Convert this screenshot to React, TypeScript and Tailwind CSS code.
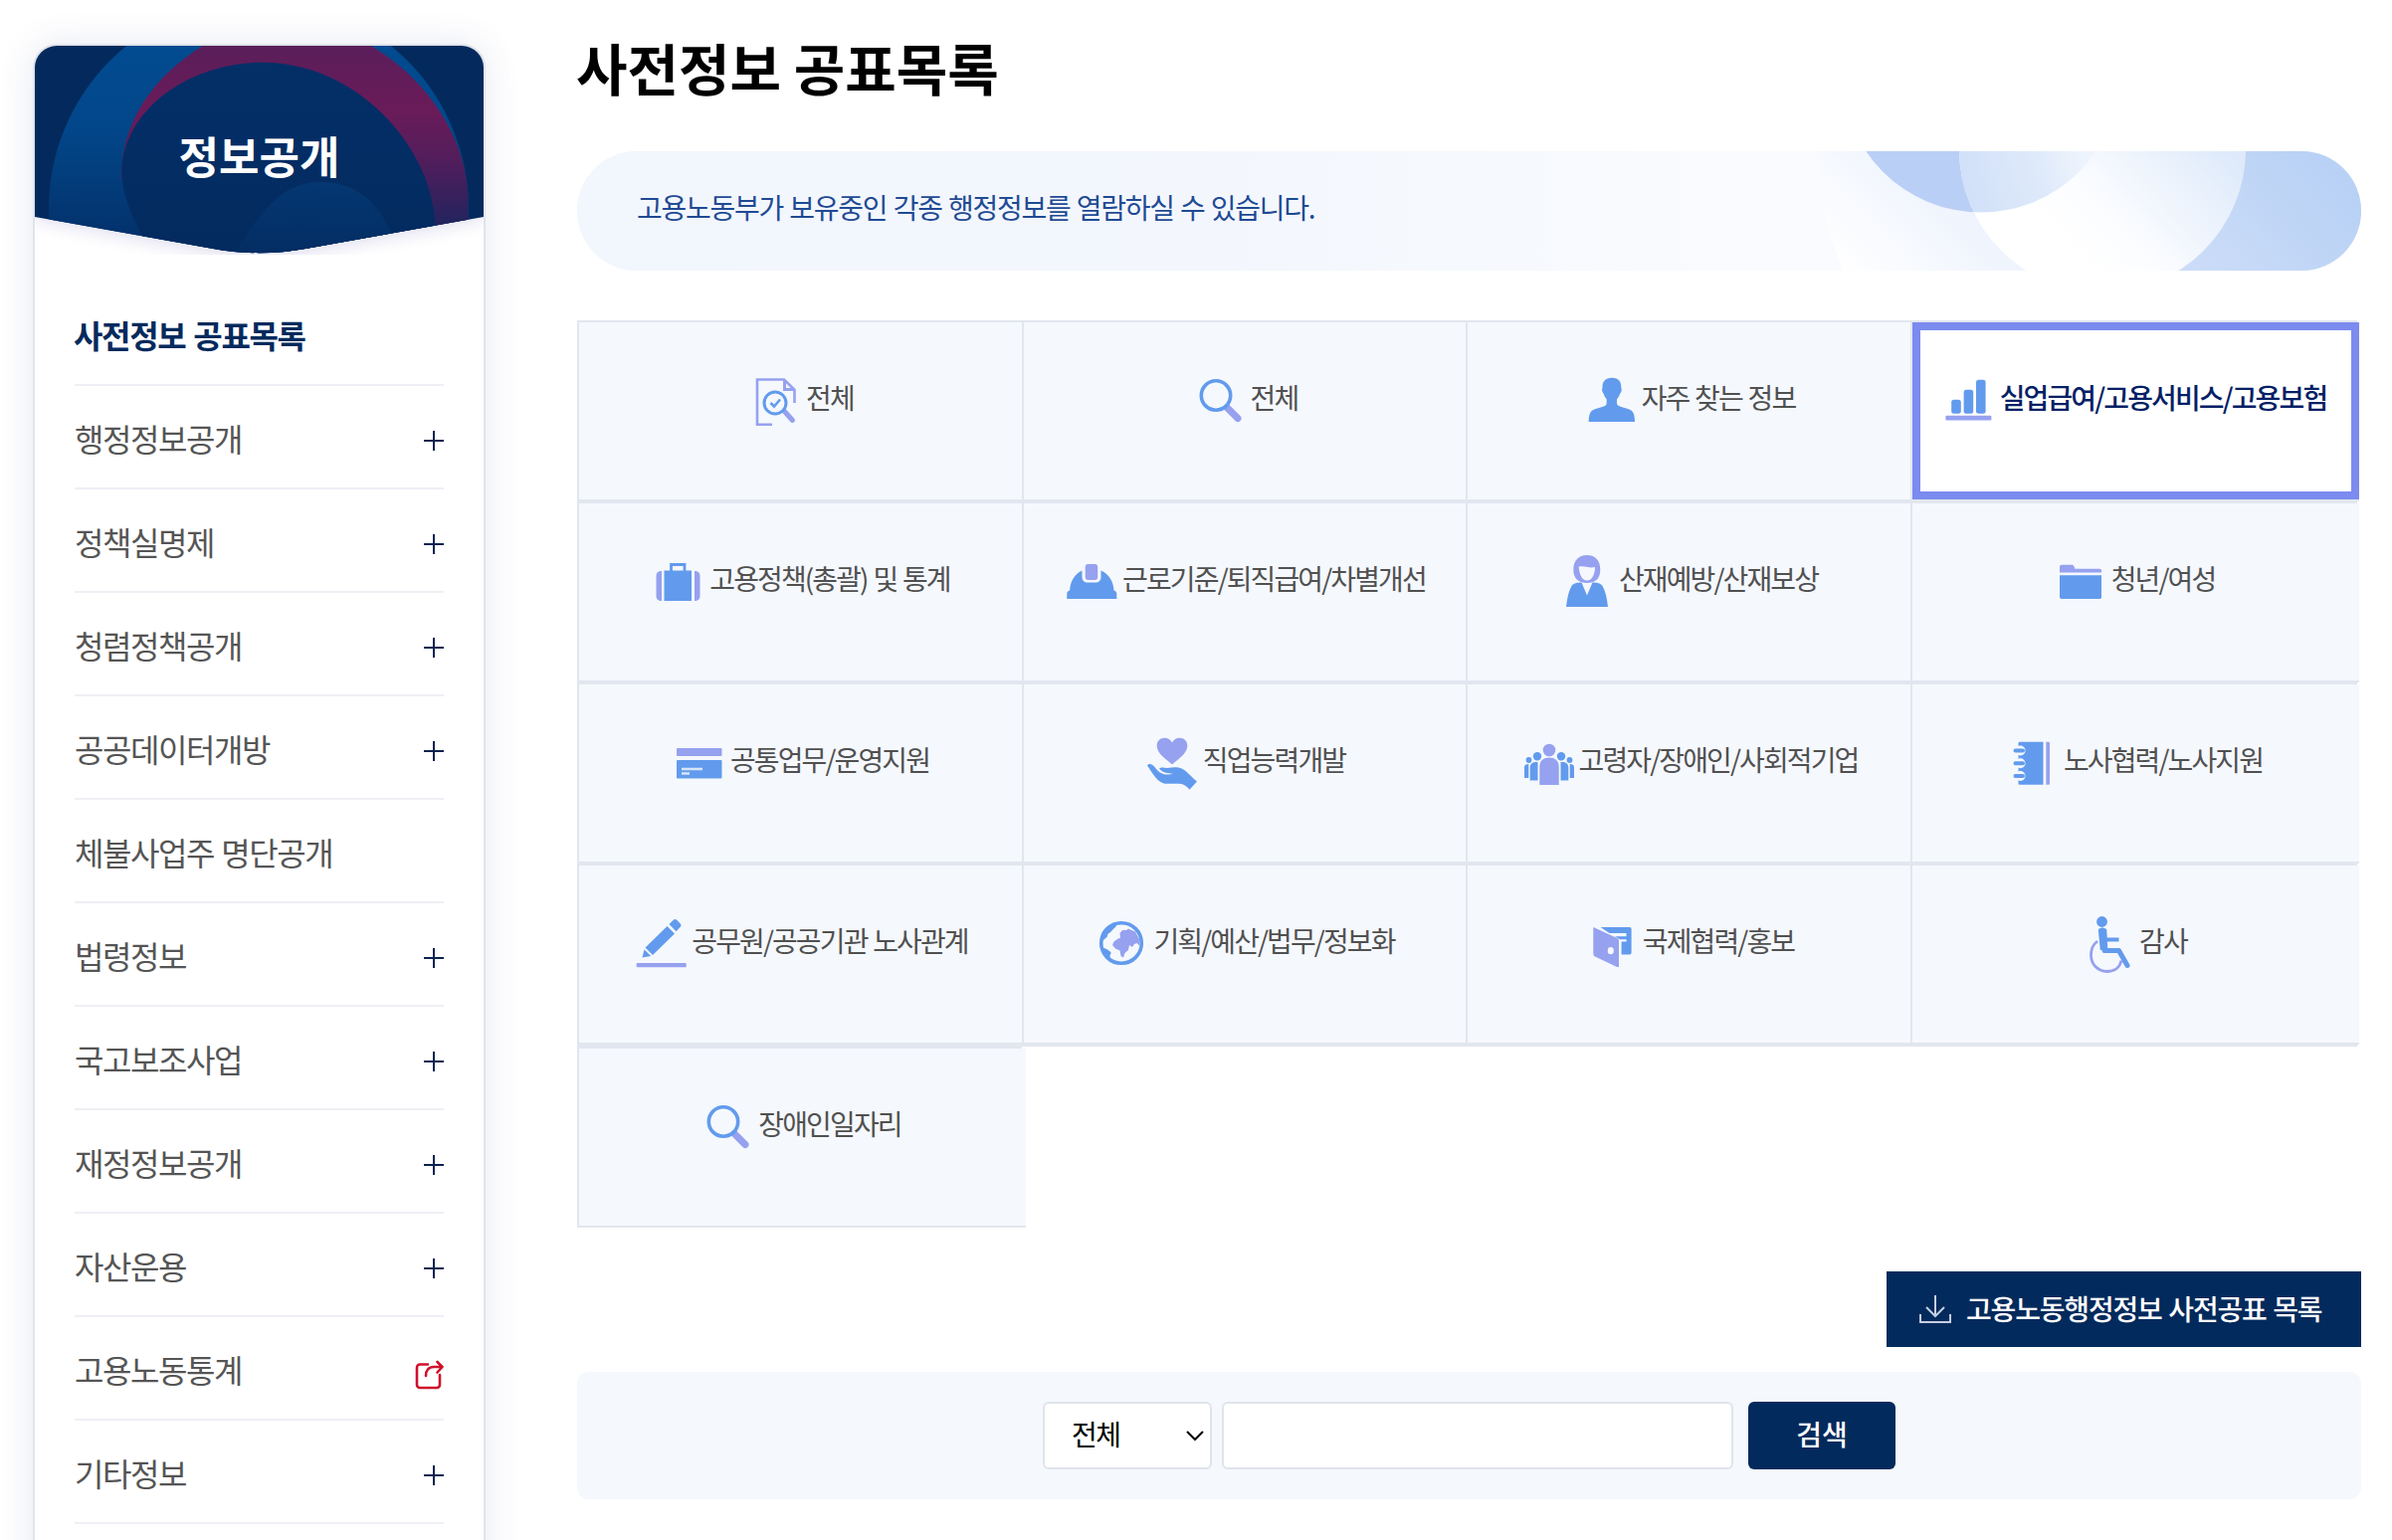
import React from 'react';

const BLUE = '#629bed';
const PURPLE = '#96a1ef';

const menus = [
  { label: '사전정보 공표목록', type: 'active' },
  { label: '행정정보공개', type: 'plus' },
  { label: '정책실명제', type: 'plus' },
  { label: '청렴정책공개', type: 'plus' },
  { label: '공공데이터개방', type: 'plus' },
  { label: '체불사업주 명단공개', type: 'none' },
  { label: '법령정보', type: 'plus' },
  { label: '국고보조사업', type: 'plus' },
  { label: '재정정보공개', type: 'plus' },
  { label: '자산운용', type: 'plus' },
  { label: '고용노동통계', type: 'link' },
  { label: '기타정보', type: 'plus' },
];

const icons: Record<string, React.ReactNode> = {
  doc: (
    <>
      <path d="M25 52.7H10V7.5h27l10.5 10.3V31" stroke={PURPLE} strokeWidth="2.6" />
      <path d="M37.5 8v9.5H47" stroke={PURPLE} strokeWidth="3" />
      <path d="M37 39l8.5 9.5" stroke={PURPLE} strokeWidth="5" strokeLinecap="round" />
      <circle cx="28" cy="31" r="11" stroke={BLUE} strokeWidth="3" />
      <path d="M23.5 31l3.5 3.5 6-7" stroke={BLUE} strokeWidth="2.6" />
    </>
  ),
  search: (
    <>
      <path d="M35 35.5l11 11" stroke={PURPLE} strokeWidth="7" strokeLinecap="round" />
      <circle cx="24" cy="23.5" r="14.7" fill="#f5f8fd" stroke={BLUE} strokeWidth="3.6" />
    </>
  ),
  person: (
    <path
      d="M29 5.8c6.5 0 9.6 3.8 9.3 9.7 0 1.2.7 1 .3 3.4-.3 1.6-1.3 2-1.6 3.2-.6 2.4-2 4-3 5.3 0 3-.3 5 1 6 3 2.2 8.5 2.5 12.5 4.5 3.5 1.8 4.5 6 4.5 12.1H5.7c0-6.1 1-10.3 4.5-12.1 4-2 9.5-2.3 12.500-4.500 1.300-1 1-3 1-6-1-1.300-2.300-2.900-2.900-5.300-.3-1.200-1.300-1.600-1.600-3.200-.4-2.400.3-2.200.3-3.400-.3-5.900 3-9.700 9.500-9.700z"
      fill={BLUE}
    />
  ),
  chart: (
    <>
      <rect x="10.2" y="27.7" width="9.6" height="14" rx="2.5" fill={BLUE} />
      <rect x="22.6" y="17.7" width="9.6" height="24" rx="2.5" fill={BLUE} />
      <rect x="35" y="7.7" width="9.6" height="34" rx="2.5" fill={BLUE} />
      <rect x="4.4" y="43.7" width="46" height="4.7" rx="1" fill={PURPLE} />
    </>
  ),
  suitcase: (
    <>
      <path d="M20.5 18v-6.5h13.5V18" stroke={BLUE} strokeWidth="2.8" />
      <rect x="13.5" y="17.5" width="27.5" height="30.5" fill={BLUE} />
      <path d="M11 18v30c-3.500 0-5.500-1.500-5.500-5V23c0-3.500 2-5 5.500-5zM44 18v30c3.500 0 5.500-1.500 5.500-5V23c0-3.500-2-5-5.500-5z" fill={PURPLE} />
    </>
  ),
  helmet: (
    <>
      <path d="M18.5 17.5v6c0 4 2 6 6 6h7c4 0 6-2 6-6v-6C46 21 50 29 50.500 37.500c2 .5 2.800 1.500 2.800 3.500v5H3.300v-5c0-2 .8-3 2.800-3.500C6.600 29 10.500 21 18.500 17.500z" fill={BLUE} />
      <rect x="21.7" y="11" width="12.5" height="16" rx="3" fill={PURPLE} />
    </>
  ),
  woman: (
    <>
      <path
        d="M27 2c8.500 0 13.300 5.500 13.300 14.500S35.500 30 27 30 13.300 25.500 13.300 16.500 18.500 2 27 2zM18.700 13.500c.5 8 3.300 14 8.300 14s8-6 8-13.500c-6 1.500-10-1.500-16.300-.5z"
        fillRule="evenodd"
        fill={PURPLE}
      />
      <path d="M21.500 29.500L27 42.500l5.500-13c4 0 8 .5 10 3.500 3 5 4.500 12 5.500 21H6c1-9 2.500-16 5.500-21 2-3 6-3.500 10-3.500z" fill={BLUE} />
    </>
  ),
  folder: (
    <>
      <path d="M7 14c0-1.500.8-2.300 2.300-2.300h10c1.500 0 2.200 1 3 4H47c1.500 0 2 .8 2 2V19.500H7z" fill={PURPLE} />
      <path d="M7 22.300h42V44c0 1.500-.7 2-2 2H9c-1.500 0-2-.7-2-2z" fill={BLUE} />
    </>
  ),
  card: (
    <>
      <rect x="5" y="14" width="45.5" height="8" rx="1" fill={PURPLE} />
      <rect x="5" y="26" width="45.5" height="18.5" rx="1" fill={BLUE} />
      <path d="M10 35h21M10 39.500h8" stroke="#d6e5fb" strokeWidth="2.4" />
    </>
  ),
  heart: (
    <>
      <path d="M28 30.500C22 25 12.700 19.500 12.700 11.500c0-4.700 3.300-7.800 7.800-7.800 3.300 0 6 1.800 7.500 4.800 1.500-3 4.200-4.800 7.500-4.800 4.500 0 7.800 3.100 7.800 7.800 0 8-9.300 13.500-15.300 19z" fill={PURPLE} />
      <path
        d="M3 31.500c2-2.500 5-1.500 7 1 3 3.500 6 7.500 12 8 3 .3 5 0 6.500-1-5 0-10.500-1-13.500-4.800 1.500-2 5-1 8-.8 5.500 0 9-1.500 14 .3 5 2 9 7.500 16 13.300l-7.500 8.300c-3-3.500-6-6-10-6H20.500C13 48 8 39 3 31.500z"
        fill={BLUE}
      />
    </>
  ),
  people: (
    <>
      <circle cx="29" cy="16" r="6.3" fill={PURPLE} />
      <path d="M19.300 51V33c0-6.500 4-9.500 9.700-9.500s9.700 3 9.700 9.500v18z" fill={PURPLE} />
      <circle cx="17" cy="22.3" r="4.2" fill={BLUE} />
      <circle cx="41" cy="22.3" r="4.2" fill={BLUE} />
      <path d="M17.500 28v18.500H9.700V34c0-4.500 2.500-6.300 7.800-6zM40.500 28v18.500h7.800V34c0-4.500-2.500-6.300-7.800-6z" fill={BLUE} />
      <circle cx="8.5" cy="26" r="2.9" fill={BLUE} />
      <circle cx="49.5" cy="26" r="2.9" fill={BLUE} />
      <path d="M8.300 30v14H4V33c0-2 1.500-3 4.300-3zM49.700 30v14H54V33c0-2-1.500-3-4.300-3z" fill={BLUE} />
    </>
  ),
  notebook: (
    <>
      <path d="M13.500 9c0-1 .5-1.300 1.500-1.300h23.500v43H15c-1 0-1.500-.3-1.500-1.300z" fill={BLUE} />
      <circle cx="15.5" cy="16.5" r="5" fill="#f5f8fd" />
      <circle cx="15.5" cy="29.2" r="5" fill="#f5f8fd" />
      <circle cx="15.5" cy="42" r="5" fill="#f5f8fd" />
      <path d="M10.500 16.500h7.500M10.500 29.200h7.500M10.500 42h7.500" stroke={BLUE} strokeWidth="4" strokeLinecap="round" />
      <path d="M41.300 7.700h2.200c1 0 1.500.5 1.500 1.500v40c0 1-.5 1.500-1.500 1.500h-2.200z" fill={PURPLE} />
    </>
  ),
  pencil: (
    <>
      <path d="M12.500 32.500l7.500 7.500L42 18.500 34.500 11zM36.500 9l4-4c1.500-1.500 2.500-1.500 4 0l3 3.200c1.400 1.400 1.300 2.500 0 3.800l-4 4.200zM11.500 34.500l6.700 6.500-8.700 1.500z" fill={BLUE} />
      <rect x="3.7" y="48" width="50" height="4.3" rx=".8" fill={PURPLE} />
    </>
  ),
  globe: (
    <>
      <circle cx="27" cy="28" r="20.3" stroke={BLUE} strokeWidth="3.6" />
      <path d="M7 26c3-1 3.500-3 5.500-4 1-1.500 0-3.500 3-4.500 1.500-1 2-2.500 5.500-5.500l2-3L13.500 11.500 7.500 19zM6.500 32c3.500 1.500 4.500 1 6.500 2.500 1.500 1.500 4 2 3.500 4-1.500 1.500-1 3.500 0 7L10 41z" fill={BLUE} />
      <path d="M25.500 18l2.500-3h4l2-1.500 3 1.500 4 1.500 4 7.500.5 7-3-3-2.500 1-2 3-3-2-1 5-3.500 3-1.500 4.500-2.500-1.500-1-5.500-4.500-2-3-3.500 1.500-3.500 3.500-2.500 3-1.500z" fill={PURPLE} />
    </>
  ),
  door: (
    <>
      <path d="M16.600 12h29c1.500 0 2 .7 2 2v23.500c0 1.300-.7 2-2 2h-8V26.500h5v-2.300h-6.500L31 21.300h11.500V18H25.500z" fill={BLUE} />
      <path d="M9.300 12l24 11c1.200.6 1.700 1.300 1.700 2.500V52c-1 .3-2 0-3-.5L11 41.500c-1.200-.6-1.700-1.500-1.700-3zM26.800 32c-2.500 0-3 1.500-3 3.700s.5 3.500 3 3.500 3-1.300 3-3.500-.5-3.700-3-3.700z" fillRule="evenodd" fill={PURPLE} />
    </>
  ),
  wheelchair: (
    <>
      <path d="M17 26C12.500 29.500 10.500 34 10.500 40c0 9.500 7 16.500 16 16.500 7.500 0 13-4 14.500-11" stroke={PURPLE} strokeWidth="2.8" />
      <circle cx="21.5" cy="6.5" r="5.4" fill={BLUE} />
      <path d="M22 15l2 20.500h14.500L47 50.500" stroke={BLUE} strokeWidth="5" strokeLinecap="round" strokeLinejoin="round" />
      <path d="M24 24.500h14.500" stroke={BLUE} strokeWidth="4" />
      <path d="M17.800 15c0-3 8.200-3 8.500 0l1 20h-7.500z" fill={BLUE} />
    </>
  ),
};

const rows = [
  [
    { icon: 'doc', label: '전체' },
    { icon: 'search', label: '전체' },
    { icon: 'person', label: '자주 찾는 정보' },
    { icon: 'chart', label: '실업급여/고용서비스/고용보험', active: true },
  ],
  [
    { icon: 'suitcase', label: '고용정책(총괄) 및 통계' },
    { icon: 'helmet', label: '근로기준/퇴직급여/차별개선' },
    { icon: 'woman', label: '산재예방/산재보상' },
    { icon: 'folder', label: '청년/여성' },
  ],
  [
    { icon: 'card', label: '공통업무/운영지원' },
    { icon: 'heart', label: '직업능력개발' },
    { icon: 'people', label: '고령자/장애인/사회적기업' },
    { icon: 'notebook', label: '노사협력/노사지원' },
  ],
  [
    { icon: 'pencil', label: '공무원/공공기관 노사관계' },
    { icon: 'globe', label: '기획/예산/법무/정보화' },
    { icon: 'door', label: '국제협력/홍보' },
    { icon: 'wheelchair', label: '감사' },
  ],
];

function Cell({ icon, label, active, last }: { icon: string; label: string; active?: boolean; last?: boolean }) {
  return (
    <a
      className={
        active
          ? 'flex h-full justify-center border-8 border-[#7b8bef] bg-white pt-[42px] font-medium text-[#061f66]'
          : 'flex h-full justify-center bg-[#f5f8fd] pt-[50px] text-[#505050]'
      }
    >
      <svg width="60" height="60" viewBox="0 0 60 60" fill="none" className="shrink-0">
        {icons[icon]}
      </svg>
      <span
        className={`-ml-px whitespace-nowrap pt-[4px] text-[28px] leading-[42px] tracking-[-1.88px] [word-spacing:1.3px] ${last ? 'pr-[4px]' : ''}`}
      >
        {label}
      </span>
    </a>
  );
}

function Sidebar() {
  return (
    <aside className="mt-[44px] ml-[33px] h-[1600px] w-[455px] shrink-0 overflow-hidden rounded-t-[24px] border-2 border-[#e0e4eb] bg-white shadow-[0_0_36px_rgba(60,70,150,0.12)]">
      <div className="relative h-[210px]">
        <svg width="451" height="210" viewBox="35 46 451 210" fill="none" className="absolute inset-0">
          <defs>
            <clipPath id="head">
              <path d="M35 46H486V218L307 250C277 255.600 244 255.600 214 250L35 218z" />
            </clipPath>
            <linearGradient id="blue" x1="0" y1="46" x2="0" y2="250" gradientUnits="userSpaceOnUse">
              <stop offset="0" stopColor="#024b90" />
              <stop offset="0.4" stopColor="#02478a" />
              <stop offset="1" stopColor="#032f68" />
            </linearGradient>
            <linearGradient id="wine" x1="0" y1="46" x2="0" y2="232" gradientUnits="userSpaceOnUse">
              <stop offset="0" stopColor="#5a1e5a" />
              <stop offset="0.35" stopColor="#6a1b59" />
              <stop offset="0.6" stopColor="#541d5b" />
              <stop offset="1" stopColor="#1e245f" />
            </linearGradient>
            <linearGradient id="navy" x1="0" y1="60" x2="0" y2="250" gradientUnits="userSpaceOnUse">
              <stop offset="0" stopColor="#032f67" />
              <stop offset="1" stopColor="#032b60" />
            </linearGradient>
            <linearGradient id="dot" x1="0" y1="183" x2="0" y2="255" gradientUnits="userSpaceOnUse">
              <stop offset="0" stopColor="#053772" />
              <stop offset="1" stopColor="#032d63" />
            </linearGradient>
            <filter id="soft" x="-10%" y="-10%" width="120%" height="140%">
              <feGaussianBlur stdDeviation="8" />
            </filter>
          </defs>
          <path d="M35 100H486V222L307 256Q260 264 214 256L35 222z" fill="#e4e3f2" filter="url(#soft)" />
          <g clipPath="url(#head)">
            <rect x="35" y="46" width="451" height="210" fill="#042a5d" />
            <circle cx="260" cy="210" r="211" fill="url(#blue)" />
            <path d="M122 180C121 125 152 78 204 46H373C430 80 470.600 140 470.600 205V260H300z" fill="url(#wine)" />
            <path d="M155 260C135 222 122.500 200 122.500 172C124 110 190 62.700 264 62.700C360 62.700 437 150 437.500 230V260z" fill="url(#navy)" />
            <path d="M230 262C262 215 280 183 323 183C358 183 385 205 397 245V262z" fill="url(#dot)" />
          </g>
        </svg>
        <h2 className="relative pt-[77px] text-center text-[44px] leading-[66px] font-bold text-white">정보공개</h2>
      </div>
      <ul className="mt-[28px] px-[40px]">
        {menus.map((menu) => (
          <li key={menu.label} className="flex h-[104px] justify-between border-b-2 border-[#efeff5] pt-[28px]">
            <span
              className={
                menu.type === 'active'
                  ? '-ml-px text-[32px] leading-[48px] font-bold tracking-[-0.042em] text-[#042a5d] [word-spacing:2px]'
                  : 'text-[32px] leading-[48px] tracking-[-0.045em] text-[#555] [word-spacing:1.5px]'
              }
            >
              {menu.label}
            </span>
            {menu.type === 'plus' && (
              <svg width="20" height="20" viewBox="0 0 20 20" className="mt-[17px]">
                <path d="M0 10h20M10 0v20" stroke="#0a2350" strokeWidth="2" />
              </svg>
            )}
            {menu.type === 'link' && (
              <svg width="30" height="30" viewBox="0 0 30 30" fill="none" stroke="#d0112b" strokeWidth="2.6" strokeLinecap="round" strokeLinejoin="round" className="mt-[15px]">
                <path d="M14 4.500H6a3 3 0 0 0-3 3V25a3 3 0 0 0 3 3h17a3 3 0 0 0 3-3V15" />
                <path d="M12 16c0-5.500 3-9 8-9h8M23.500 2l5 5-5 5.500" />
              </svg>
            )}
          </li>
        ))}
      </ul>
    </aside>
  );
}

function Banner() {
  return (
    <div className="relative mt-[50px] h-[120px] w-[1793px] overflow-hidden rounded-full bg-[#f3f7fd]">
      <svg width="1793" height="120" viewBox="580 152 1793 120" className="absolute inset-0">
        <defs>
          <linearGradient id="base" x1="580" y1="0" x2="2373" y2="0" gradientUnits="userSpaceOnUse">
            <stop offset="0" stopColor="#f2f6fd" />
            <stop offset="0.35" stopColor="#f3f7fd" />
            <stop offset="0.7" stopColor="#fafbfe" />
          </linearGradient>
          <linearGradient id="big" x1="1850" y1="272" x2="2060" y2="60" gradientUnits="userSpaceOnUse">
            <stop offset="0" stopColor="#ffffff" />
            <stop offset="0.5" stopColor="#ecf2fd" />
            <stop offset="1" stopColor="#e6eefc" />
          </linearGradient>
          <linearGradient id="edge" x1="2190" y1="272" x2="2330" y2="152" gradientUnits="userSpaceOnUse">
            <stop offset="0" stopColor="#cdddf8" />
            <stop offset="1" stopColor="#b8d1f5" />
          </linearGradient>
          <linearGradient id="ring" x1="2060" y1="240" x2="2200" y2="110" gradientUnits="userSpaceOnUse">
            <stop offset="0" stopColor="#ffffff" />
            <stop offset="0.3" stopColor="#fcfdff" />
            <stop offset="1" stopColor="#deeafa" />
          </linearGradient>
          <linearGradient id="mix" x1="1975" y1="200" x2="2108" y2="160" gradientUnits="userSpaceOnUse">
            <stop offset="0" stopColor="#d1e0f9" />
            <stop offset="0.6" stopColor="#dfeafa" />
            <stop offset="1" stopColor="#eaf1fc" stopOpacity="0.5" />
          </linearGradient>
          <clipPath id="ringClip">
            <circle cx="2113" cy="150" r="144" />
          </clipPath>
        </defs>
        <rect x="580" y="152" width="1793" height="120" fill="url(#base)" />
        <circle cx="2140" cy="152" r="312" fill="url(#big)" />
        <rect x="2113" y="152" width="260" height="120" fill="url(#edge)" />
        <circle cx="1991" cy="74" r="139.5" fill="#bacff5" />
        <circle cx="2113" cy="150" r="144" fill="url(#ring)" />
        <circle cx="1991" cy="74" r="139.5" fill="url(#mix)" clipPath="url(#ringClip)" />
      </svg>
      <p className="relative pt-[35px] pl-[60px] text-[28px] leading-[42px] tracking-[-0.045em] text-[#1f4a94] [word-spacing:1.3px]">
        고용노동부가 보유중인 각종 행정정보를 열람하실 수 있습니다.
      </p>
    </div>
  );
}

export default function App() {
  return (
    <div className="flex h-[1548px] w-[2404px] overflow-hidden bg-white font-['Noto_Sans_CJK_KR','Noto_Sans',sans-serif]">
      <Sidebar />
      <main className="ml-[92px] w-[1793px] pt-[31px]">
        <h1 className="-ml-px text-[56px] leading-[71px] font-bold text-black">사전정보 공표목록</h1>
        <Banner />

        <div className="mt-[50px]">
          {rows.map((row, idx) => (
            <div key={idx} className="w-[1791px] border-b-2 border-l-2 border-[#e2e6ee]">
              <div className="h-[2px] w-[1787px] bg-[#e2e6ee]" />
              <div className="grid h-[178px] grid-cols-[445px_446px_447px_451px]">
                {row.map((item, i) => (
                  <div key={i} className={i > 0 ? 'border-l-2 border-[#e2e6ee]' : ''}>
                    <Cell {...item} last={i === 3} />
                  </div>
                ))}
              </div>
            </div>
          ))}
          <div className="h-[2px] w-[1789px] bg-[#e2e6ee]" />
          <div className="w-[451px] border-b-2 border-l-2 border-[#e2e6ee]">
            <div className="h-[2px] w-[445px] bg-[#e2e6ee]" />
            <div className="h-[178px]">
              <Cell icon="search" label="장애인일자리" last />
            </div>
          </div>
        </div>

        <div className="mt-[44px] flex justify-end">
          <button className="flex h-[76px] w-[477px] items-center bg-[#032a5c] pl-[33px] text-[28px] font-medium tracking-[-0.042em] text-white [word-spacing:1.5px]">
            <svg width="32" height="30" viewBox="0 0 32 30" fill="none" stroke="#c4cfe3" strokeWidth="2" className="mr-[15px]">
              <path d="M16 1v20M7 13l9 9 9-9M1 20v8h30v-8" />
            </svg>
            <span className="pb-[3px] whitespace-nowrap">고용노동행정정보 사전공표 목록</span>
          </button>
        </div>

        <div className="mt-[25px] flex h-[128px] rounded-[12px] bg-[#f5f8fd] pt-[30px] pl-[468px]">
          <div className="flex h-[68px] w-[170px] items-center justify-between rounded-[6px] border-2 border-[#e0e4ec] bg-white pr-[5px] pl-[27px] text-[28px] tracking-[-0.05em] text-black">
            <span className="pb-[4px]">전체</span>
            <svg width="20" height="12" viewBox="0 0 20 12" fill="none" stroke="#111" strokeWidth="2.2">
              <path d="M2 2l8 8 8-8" />
            </svg>
          </div>
          <input className="ml-[10px] h-[68px] w-[514px] rounded-[6px] border-2 border-[#e0e4ec] bg-white" />
          <button className="ml-[15px] h-[68px] w-[148px] rounded-[6px] bg-[#032a5c] pb-[4px] text-[28px] font-medium text-white">검색</button>
        </div>
      </main>
    </div>
  );
}
